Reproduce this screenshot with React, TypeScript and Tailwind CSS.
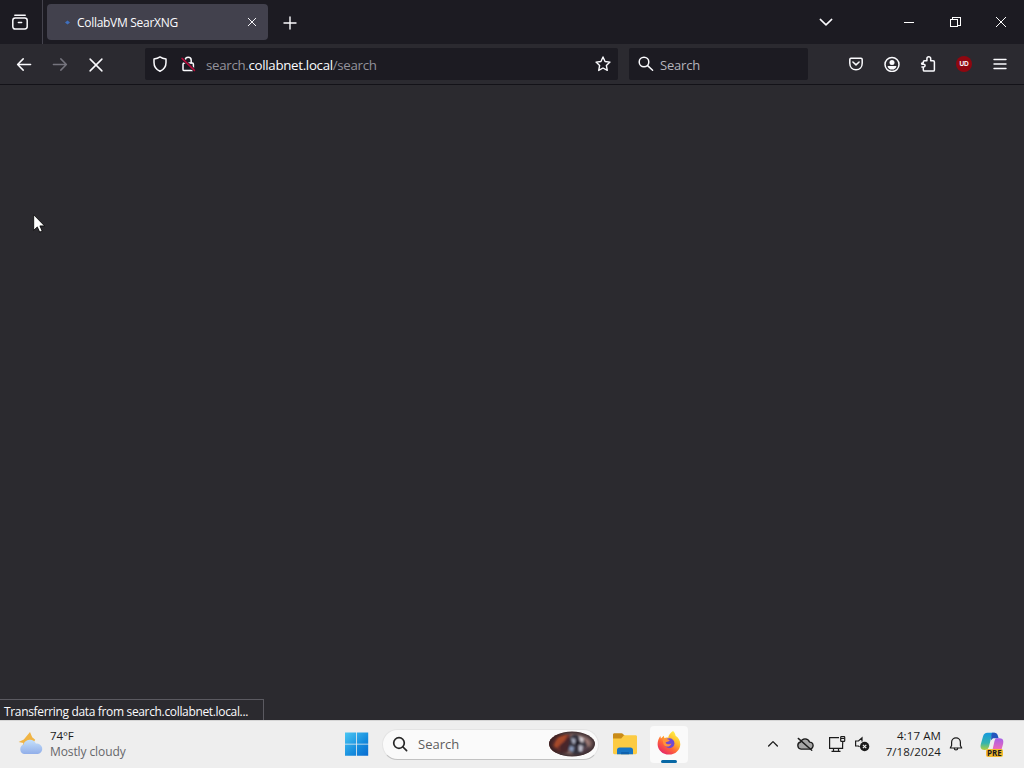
import type { ReactNode } from "react";

interface IconProps {
  size?: number;
  className?: string;
  width?: number;
  children: ReactNode;
}

function Icon({ size = 16, className = "", width = 1.4, children }: IconProps) {
  return (
    <svg
      width={size}
      height={size}
      viewBox="0 0 16 16"
      fill="none"
      stroke="currentColor"
      strokeWidth={width}
      strokeLinecap="round"
      strokeLinejoin="round"
      className={`shrink-0 ${className}`}
    >
      {children}
    </svg>
  );
}

function ToolbarButton({ children }: { children: ReactNode }) {
  return (
    <button className="flex h-8 w-9 items-center justify-center">
      {children}
    </button>
  );
}

function TabStrip() {
  return (
    <div className="flex h-11 items-center bg-[#1c1b22] text-[#fbfbfe]">
      {/* Firefox View */}
      <div className="flex h-11 w-[43px] items-center border-r border-[#44434d] pl-3">
        <Icon width={1.5}>
          <path d="M2.8 1.2h10.4" />
          <path d="M.8 6.4c0-1.600 1-2.400 2.400-2.400h9.600c1.400 0 2.400.8 2.400 2.400v6.200c0 1.500-1 2.400-2.400 2.400H3.200c-1.400 0-2.400-.9-2.400-2.400z" />
          <path d="M6.4 8.400h3.200" />
        </Icon>
      </div>

      {/* Active tab */}
      <div className="ml-1 flex h-9 w-[221px] items-center rounded bg-[#42414d] pr-2.5">
        <svg width="7" height="7" viewBox="0 0 7 7" className="ml-[17px]">
          <path d="M3.500 1.500l2.500 2-2.500 2-2.500-2z" fill="#3f6fbd" />
        </svg>
        <span className="ml-[6px] pt-0.5 font-['Open_Sans',sans-serif] text-[12px] tracking-[-0.29px] whitespace-nowrap">
          CollabVM SearXNG
        </span>
        <Icon size={12} className="ml-auto" width={1.3}>
          <path d="M3 3l10 10M13 3L3 13" />
        </Icon>
      </div>
      <Icon className="mt-px ml-[14px]">
        <path d="M8 2v12M2 8h12" />
      </Icon>

      {/* Window controls */}
      <div className="ml-auto flex items-center">
        <Icon className="mr-[52px]" width={1.5}>
          <path d="M2.3 5.4L8 10.9l5.7-5.5" />
        </Icon>
        <div className="flex w-[46px] justify-center">
          <span className="h-px w-[10px] bg-white" />
        </div>
        <div className="flex w-[46px] justify-center">
          <svg width="11" height="11" fill="none" stroke="white" shapeRendering="crispEdges">
            <rect x="0.5" y="2.5" width="7" height="7" />
            <path d="M2.5 2V.5h7.5v7.5H8" />
          </svg>
        </div>
        <div className="flex w-[46px] justify-center">
          <svg width="12" height="12" fill="none" stroke="white">
            <path d="M1 1l10 10M11 1L1 11" />
          </svg>
        </div>
      </div>
    </div>
  );
}

function NavToolbar() {
  return (
    <div className="flex h-[41px] items-center border-b border-[#131218] bg-[#2b2a30] px-1.5 text-[#fbfbfe]">
      <ToolbarButton>
        <Icon width={1.5}>
          <path d="M14.6 8.500H1.600M7.200 2.900L1.600 8.500l5.600 5.600" />
        </Icon>
      </ToolbarButton>
      <ToolbarButton>
        <Icon width={1.5} className="text-[#75747d]">
          <path d="M1.400 8.500h13M8.800 2.900l5.600 5.600-5.600 5.600" />
        </Icon>
      </ToolbarButton>
      <ToolbarButton>
        <Icon width={1.5} className="mt-px">
          <path d="M2.100 2.100l11.800 11.800M13.900 2.100L2.100 13.900" />
        </Icon>
      </ToolbarButton>

      {/* Address bar */}
      <div className="ml-[31px] flex h-8 w-[473px] items-center rounded-xs bg-[#1c1b22] px-[7px]">
        <Icon width={1.5}>
          <path d="M8 .9c1.700 1.200 3.500 1.800 6 2v3.500c0 4-2 7-6 8.800C4 13.400 2 10.400 2 6.400V2.900c2.500-.2 4.300-.8 6-2z" />
        </Icon>
        <Icon className="ml-3" width={1.5}>
          <rect x="3" y="7" width="10.400" height="7.600" rx="1.200" />
          <path d="M5.200 7V4.200a3 3 0 0 1 6 0V7" />
          <path d="M2 2.400l12.500 12" stroke="#1c1b22" strokeWidth="3" />
          <path d="M2 2.400l12.500 12" stroke="#b80b3c" />
        </Icon>
        <span className="ml-[10px] pt-1 font-['Open_Sans',sans-serif] text-[13.300px] tracking-[-0.31px] whitespace-nowrap text-[#93929b]">
          search.<span className="text-[#fbfbfe]">collabnet.local</span>/search
        </span>
        <Icon className="ml-auto">
          <path d="M8 1l2.050 4.500 4.950.6-3.650 3.350.95 4.950L8 12l-4.300 2.400.95-4.950L1 6.100l4.950-.6z" />
        </Icon>
      </div>

      {/* Search bar */}
      <div className="ml-[11px] flex h-8 w-[179px] items-center rounded-xs bg-[#1c1b22] pl-[9px]">
        <Icon width={1.5}>
          <circle cx="6" cy="6" r="4.800" />
          <path d="M9.600 9.600l5 4.600" />
        </Icon>
        <span className="ml-[6px] pt-1 font-['Open_Sans',sans-serif] text-[13px] tracking-[-0.2px] text-[#b5b4bc]">
          Search
        </span>
      </div>

      <div className="ml-auto flex">
        <ToolbarButton>
          <Icon width={1.5}>
            <path d="M3 2.200h10c.7 0 1.200.5 1.200 1.200v3.900c0 3.800-2.600 6.500-6.200 6.500s-6.200-2.700-6.200-6.500V3.400c0-.7.5-1.200 1.200-1.200z" />
            <path d="M4.900 6L8 8.900 11.100 6" />
          </Icon>
        </ToolbarButton>
        <ToolbarButton>
          <Icon width={1.5}>
            <circle cx="8" cy="8.500" r="7" />
            <circle cx="8" cy="6.400" r="2.500" fill="currentColor" stroke="none" />
            <path d="M3.600 9.900h8.800c0 2-2 3.700-4.400 3.700s-4.400-1.700-4.400-3.700z" fill="currentColor" stroke="none" />
          </Icon>
        </ToolbarButton>
        <ToolbarButton>
          <Icon width={1.500}>
            <path d="M3.300 10.900v3c0 .8.400 1.200 1.200 1.200h8.700c.8 0 1.200-.4 1.200-1.200V6c0-.8-.4-1.200-1.200-1.200h-2.500V2.700a1.900 1.900 0 0 0-3.800 0v2.100H4.500c-.8 0-1.200.4-1.200 1.200v1H2.200M2.200 7c-.8.5-.8 1 0 1.300h1.600a1.300 1.300 0 0 1 0 2.600H1.900" />
          </Icon>
        </ToolbarButton>
        <ToolbarButton>
          <span className="flex h-4 w-4 items-center justify-center rounded-full bg-[#8f0710]">
            <span className="font-['Liberation_Sans',sans-serif] text-[6.500px] leading-none font-bold tracking-[-0.3px]">
              UD
            </span>
          </span>
        </ToolbarButton>
        <ToolbarButton>
          <Icon>
            <path d="M2 3.500h12M2 8h12M2 12.500h12" />
          </Icon>
        </ToolbarButton>
      </div>
    </div>
  );
}

function PageArea() {
  return (
    <main className="relative flex-1 bg-[#2b2a2f]">
      <svg width="12" height="19" className="absolute top-[129px] left-[33px]">
        <path
          d="M.7.8v15.500l3.600-3.400 2.400 5.200 2.500-1.100-2.300-5.100h4.700z"
          fill="white"
          stroke="black"
          strokeWidth="0.8"
        />
      </svg>
      <div className="absolute bottom-0 left-0 flex h-[21px] w-[264px] items-center border-t border-r border-[#5b5a61] bg-[#2b2a2f] pl-1 font-['Open_Sans',sans-serif] text-[12px] tracking-[-0.34px] whitespace-nowrap text-[#fbfbfe]">
        <span className="pt-[3px]">Transferring data from search.collabnet.local...</span>
      </div>
    </main>
  );
}

function WeatherIcon() {
  return (
    <svg width="26" height="24" viewBox="0 0 26 24">
      <defs>
        <linearGradient id="cloud" x1="0" y1="0" x2="0" y2="1">
          <stop offset="0" stopColor="#c6e1fb" />
          <stop offset="1" stopColor="#91aee9" />
        </linearGradient>
      </defs>
      <path d="M12 0l2.200 5.300 3 2.500-4 7-9-.5 1.200-3.300L.6 10l5.200-2.600z" fill="#f0b444" />
      <path
        d="M6 22a5 5 0 0 1-.5-9.500 6.600 6.600 0 0 1 12.400-.9A5.300 5.300 0 0 1 20 22z"
        fill="url(#cloud)"
      />
    </svg>
  );
}

function WindowsLogo() {
  return (
    <svg width="24" height="24" viewBox="0 0 24 24">
      <defs>
        <linearGradient id="win" x1="0" y1="0" x2="24" y2="24" gradientUnits="userSpaceOnUse">
          <stop offset="0" stopColor="#4cc8f4" />
          <stop offset="0.600" stopColor="#148bdd" />
          <stop offset="1" stopColor="#0869cf" />
        </linearGradient>
      </defs>
      <path d="M0 .5h11.200v11.200H0zM12 .5h11.200v11.200H12zM0 12.500h11.200v11.200H0zM12 12.500h11.200v11.200H12z" fill="url(#win)" />
    </svg>
  );
}

/* Daily picture at the end of the search box */
function SearchHighlight() {
  return (
    <svg width="48" height="26" viewBox="0 0 48 26">
      <defs>
        <clipPath id="oval">
          <ellipse cx="24" cy="13" rx="23" ry="12.500" />
        </clipPath>
        <filter id="soft">
          <feGaussianBlur stdDeviation="0.9" />
        </filter>
        <radialGradient id="edge">
          <stop offset="0.700" stopColor="#241a20" stopOpacity="0" />
          <stop offset="1" stopColor="#241a20" stopOpacity="0.750" />
        </radialGradient>
      </defs>
      <g clipPath="url(#oval)">
        <rect width="48" height="26" fill="#7d625f" />
        <g filter="url(#soft)">
          <path d="M0 3h22l-2 10-5 9H0z" fill="#652f2a" />
          <path d="M10 6l10-3-4 8-8 6-3-2z" fill="#a64a29" />
          <path d="M12 14l9-8 3 5-5 11-7 1z" fill="#48262a" />
          <path d="M22 6l5-3 8 4 4 7-5 9-8 1-6-6z" fill="#34313d" />
          <path d="M23 7l4 1 1 4-3 1z" fill="#a9adc0" />
          <path d="M31 5l5 2-1 5-3-2z" fill="#d5ced3" />
          <path d="M31 14l4 1-1 6-3-1z" fill="#c1c0ce" />
          <path d="M22 15l4 1-1 5-4-2z" fill="#8c9cbd" />
          <path d="M37 5l8 5-2 6-5-4z" fill="#9c7975" />
          <path d="M36 15l7 2-4 5-6 1z" fill="#56434c" />
          <circle cx="29" cy="12" r="2" fill="#15161e" />
        </g>
        <ellipse cx="24" cy="13" rx="23" ry="12.500" fill="url(#edge)" />
      </g>
    </svg>
  );
}

function FolderIcon() {
  return (
    <svg width="26" height="24" viewBox="0 0 26 24">
      <path d="M1 2.600C1 1.800 1.600 1.200 2.400 1.200h7.200c.6 0 1 .2 1.400.7L13 4v4H1z" fill="#c98b18" />
      <path d="M1 6.600h8.200L12 3.200h11.600c.8 0 1.400.6 1.400 1.400v16.200c0 .8-.6 1.400-1.400 1.400H2.400c-.8 0-1.400-.6-1.400-1.400z" fill="#fccb43" />
      <path d="M5 22.200V18c0-1.600 1-2.600 2.600-2.600h10.800c1.600 0 2.600 1 2.600 2.600v4.200z" fill="#1775c4" />
      <path d="M9 22.200v-1.200c0-.6.400-1 1-1h6c.6 0 1 .4 1 1v1.200z" fill="#0e61ad" />
    </svg>
  );
}

function FirefoxIcon() {
  return (
    <svg width="24" height="24" viewBox="0 0 24 24">
      <defs>
        <linearGradient id="fox" x1="19" y1="2" x2="5" y2="22" gradientUnits="userSpaceOnUse">
          <stop offset="0" stopColor="#fff044" />
          <stop offset="0.350" stopColor="#ffb52b" />
          <stop offset="0.650" stopColor="#ff633a" />
          <stop offset="1" stopColor="#e62667" />
        </linearGradient>
      </defs>
      <path
        d="M16 0c1.600 1.300 2.300 2.900 2.600 4.700 2.800 1.700 4.700 4.800 4.700 8.500C23.300 19 18.400 23.600 12 23.600S.6 19 .6 13.200c0-3.300 1.100-6.300 2.800-8.300l.5 2.700 2.900-2.900.6 2.500c1.200-.7 2.500-.8 3.900-.4C11.300 4.500 13.200 1.800 16 0z"
        fill="url(#fox)"
      />
      <circle cx="12.400" cy="12.300" r="5" fill="#704ad2" />
      <path d="M5.500 8.200c3-1.200 5.500-.4 7.300 1.300-1.200 1.500-3.400.8-4.300 2.300 1.800 2.400 4.700 1.500 6 .4-1 4.200-6.300 4.500-8 1.100z" fill="#ff923b" />
    </svg>
  );
}

function CopilotIcon() {
  return (
    <svg width="24" height="24" viewBox="0 0 24 24">
      <defs>
        <linearGradient id="cop-left" x1="0" y1="0" x2="0" y2="1">
          <stop offset="0" stopColor="#1599de" />
          <stop offset="0.600" stopColor="#35b4ae" />
          <stop offset="1" stopColor="#b4cf3b" />
        </linearGradient>
        <linearGradient id="cop-right" x1="0" y1="0" x2="0" y2="1">
          <stop offset="0" stopColor="#a560e8" />
          <stop offset="0.600" stopColor="#e668bd" />
          <stop offset="1" stopColor="#f79a68" />
        </linearGradient>
      </defs>
      <path d="M7.500.8H15c-3 1-3.500 4-4.400 7.200L9 14.500c-.7 2.500-2 3.500-4.500 3.500C.5 18 0 15 1 11.500l2-7C3.800 1.900 5 .8 7.500.8z" fill="url(#cop-left)" />
      <path d="M12 .8h2.400c2 0 2.800 1 3.400 2.700l.8 2.700H13l-2 2c.3-3 .2-5.600 1-7.400z" fill="#2355bd" />
      <path d="M16 6.200h3.500c4 0 4.300 3 3.500 6l-2 7c-.7 2.400-2 3.300-4.400 3.300H9c2.300-.8 3-3 3.700-5.600L14.500 9c.3-1.200.7-2 1.500-2.800z" fill="url(#cop-right)" />
    </svg>
  );
}

function Taskbar() {
  return (
    <footer className="flex h-12 items-center border-t border-[#d5d5d5] bg-[#eeeeee] pb-px font-['Open_Sans',sans-serif] text-[#1b1b1b]">
      <div className="flex w-[345px] items-center pl-[18px]">
        <WeatherIcon />
        <div className="ml-1.5 text-[12px] leading-4 tracking-[-0.1px]">
          <div className="text-[11.500px]">74°F</div>
          <div className="text-[#66666a]">Mostly cloudy</div>
        </div>
      </div>

      <WindowsLogo />
      <div className="ml-[13px] flex h-[31px] w-[217px] items-center rounded-full border border-[#e4e4e4] border-b-[#c2c2c2] bg-[#fafafa] pl-[9px]">
        <Icon width={1.7} className="text-[#262626]">
          <circle cx="7" cy="7" r="5.300" />
          <path d="M11 11l3.600 3.600" />
        </Icon>
        <span className="ml-[10px] pt-px text-[13px] text-[#5d5d5d]">Search</span>
        <span className="mr-0.5 ml-auto">
          <SearchHighlight />
        </span>
      </div>
      <div className="ml-[13px]">
        <FolderIcon />
      </div>
      <div className="ml-3 flex h-[37px] w-[38px] flex-col items-center justify-between rounded bg-[#fafafa] pt-[5px]">
        <FirefoxIcon />
        <span className="h-[3px] w-4 rounded-full bg-[#0868a5]" />
      </div>

      {/* Tray */}
      <Icon size={14} className="ml-auto" width={1.5}>
        <path d="M3 10.300l5-5 5 5" />
      </Icon>
      <Icon size={18} className="ml-4" width={1.2}>
        <path d="M4.500 12.500a3.200 3.200 0 0 1-.4-6.300 4.200 4.200 0 0 1 7.900.1 3.100 3.100 0 0 1 .2 6.200z" fill="#a5a5a5" />
        <path d="M2 3l12 10.500" />
      </Icon>
      <svg width="18" height="18" viewBox="0 0 18 18" fill="none" stroke="currentColor" strokeWidth="1.200" className="ml-[14px]">
        <path d="M11 2.600H1.600v10.800h13V9" />
        <path d="M5.500 13.500v3M10.500 13.500v3M3.500 16.400h9" />
        <rect x="12.700" y="1.600" width="4" height="4.800" rx="0.600" />
        <path d="M14.700 6.500V9M13 3.500h3.400" />
      </svg>
      <svg width="16" height="16" viewBox="0 0 16 16" fill="none" stroke="currentColor" strokeWidth="1.200" className="ml-2">
        <path d="M8 5.500V1.800L4.500 5H1.600v5h2.900l1 .9" />
        <circle cx="10.600" cy="10.500" r="4.700" fill="#1b1b1b" stroke="none" />
        <path d="M8.900 8.800l3.400 3.400M12.300 8.800l-3.400 3.400" stroke="#eee" />
      </svg>
      <div className="ml-[14px] w-[57px] text-right text-[11.500px] leading-4 tracking-[0.1px] whitespace-nowrap">
        <div>4:17 AM</div>
        <div>7/18/2024</div>
      </div>
      <Icon className="ml-[7px]" width={1.2}>
        <path d="M2.300 12h11.400l-1.300-2.500V6.300a4.400 4.400 0 0 0-8.800 0v3.200z" />
        <path d="M6.300 12.300a1.700 1.700 0 0 0 3.400 0" />
      </Icon>
      <div className="relative mr-5 ml-4">
        <CopilotIcon />
        <span className="absolute -bottom-px left-[6px] rounded-xs bg-[#f4ba2e] px-px text-[8px] leading-[8px] font-bold">
          PRE
        </span>
      </div>
    </footer>
  );
}

export default function App() {
  return (
    <div className="flex h-screen w-screen flex-col overflow-hidden">
      <TabStrip />
      <NavToolbar />
      <PageArea />
      <Taskbar />
    </div>
  );
}
